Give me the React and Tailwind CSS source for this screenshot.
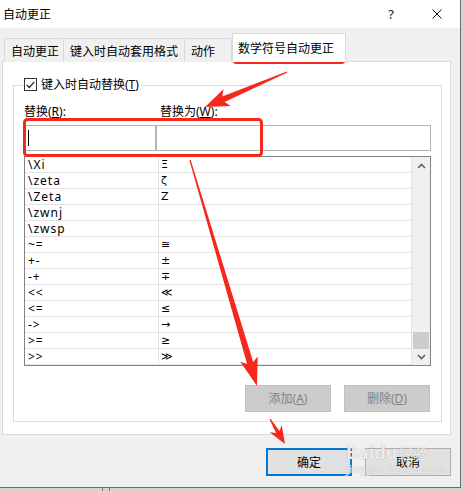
import React from "react";

const RED = "#f4281d";

const rows = [
  ["\\Xi", "Ξ"],
  ["\\zeta", "ζ"],
  ["\\Zeta", "Z"],
  ["\\zwnj", ""],
  ["\\zwsp", ""],
  ["~=", "≅"],
  ["+-", "±"],
  ["-+", "∓"],
  ["<<", "≪"],
  ["<=", "≤"],
  ["->", "→"],
  [">=", "≥"],
  [">>", "≫"],
];

// 手绘箭头：尾部细，头部粗
const arrowPoints = (tx, ty, hx, hy, headLen, headHalf, shaft) => {
  const dx = hx - tx;
  const dy = hy - ty;
  const len = Math.hypot(dx, dy);
  const ux = dx / len;
  const uy = dy / len;
  const nx = -uy;
  const ny = ux;
  const bx = hx - ux * headLen;
  const by = hy - uy * headLen;
  const pts = [
    [tx + nx * 0.6, ty + ny * 0.6],
    [bx + nx * shaft, by + ny * shaft],
    [bx - ux * 4 + nx * headHalf, by - uy * 4 + ny * headHalf],
    [hx, hy],
    [bx - ux * 4 - nx * headHalf, by - uy * 4 - ny * headHalf],
    [bx - nx * shaft, by - ny * shaft],
    [tx - nx * 0.6, ty - ny * 0.6],
  ];
  return pts.map((p) => p.map((v) => v.toFixed(1)).join(",")).join(" ");
};

const Chevron = ({ up }) => (
  <svg width="9" height="6" viewBox="0 0 9 6">
    <polyline
      points={up ? "1,5 4.5,1.5 8,5" : "1,1 4.5,4.5 8,1"}
      fill="none"
      stroke="#606060"
      strokeWidth="1.6"
    />
  </svg>
);

const App = () => {
  return (
    <div className="relative w-[463px] h-[491px] overflow-hidden bg-[#d4d4d4] font-['Noto_Sans','Noto_Sans_CJK_SC',sans-serif] text-[12px] leading-[15px] text-black">
      <div className="w-[461px] h-[488px] bg-[#f0f0f0] border-r border-b border-[#6b6b6b] flex flex-col">
        {/* 标题栏 */}
        <div className="h-[28px] bg-white flex items-center">
          <span className="pl-[3px] text-[12px]">自动更正</span>
          <span className="ml-auto text-[13px] text-[#222]">?</span>
          <svg className="ml-[38px] mr-[18px]" width="10" height="10" viewBox="0 0 10 10">
            <path d="M0.5 0.5 L9.5 9.5 M9.5 0.5 L0.5 9.5" stroke="#111" strokeWidth="1" />
          </svg>
        </div>

        {/* 选项卡 */}
        <div className="pt-[6px] pl-[4px] flex items-end h-[34px] relative z-10 -mb-px">
          <div className="h-[24px] w-[59px] border-l border-t border-[#d9d9d9] bg-[#f0f0f0] pl-[6px] pt-[5px]">
            自动更正
          </div>
          <div className="h-[24px] w-[121px] border-l border-t border-[#d9d9d9] bg-[#f0f0f0] pl-[6px] pt-[5px]">
            键入时自动套用格式
          </div>
          <div className="h-[24px] w-[48px] border-l border-t border-r border-[#d9d9d9] bg-[#f0f0f0] pl-[6px] pt-[5px]">
            动作
          </div>
          <div className="h-[29px] w-[114px] border-l border-t border-r border-[#d9d9d9] bg-white pl-[5px] pt-[7px]">
            数学符号自动更正
          </div>
        </div>

        {/* 面板 */}
        <div className="ml-[2px] w-[449px] h-[374px] bg-white border border-[#d9d9d9] pt-[23px] pl-[10px]">
          <div className="relative w-[429px] h-[337px] border border-[#dcdcdc] pt-[18px] px-[10px]">
            <div className="absolute left-[9px] top-[-8px] bg-white pr-[2px] pl-[1px] flex items-center gap-[4px] h-[13px]">
              <div className="w-[13px] h-[13px] border border-[#333] flex items-center justify-center">
                <svg width="9" height="8" viewBox="0 0 9 8">
                  <polyline points="0.8,4 3.3,6.5 8.3,0.8" fill="none" stroke="#222" strokeWidth="1.2" />
                </svg>
              </div>
              <span>
                键入时自动替换(<span className="underline">T</span>)
              </span>
            </div>

            <div className="flex h-[16px]">
              <span className="w-[136px]">
                替换(<span className="underline">R</span>):
              </span>
              <span>
                替换为(<span className="underline">W</span>):
              </span>
            </div>

            <div className="mt-[5px] ml-[1px] flex">
              <div className="w-[131px] h-[26px] border border-[#b4b4b4] flex items-center pl-[2px]">
                <div className="w-px h-[16px] bg-black" />
              </div>
              <div className="w-[276px] h-[26px] border border-[#b4b4b4]" />
            </div>

            <div className="mt-[5px] w-[407px] h-[210px] border border-[#828282] flex">
              <div className="w-[387px] flex flex-col">
                {rows.map((r, i) => (
                  <div key={i} className="h-[16px] flex border-b border-[#e3e3e3]">
                    <div className="w-[134px] border-r border-[#e3e3e3] pl-[3px] whitespace-pre tracking-[1px]">
                      {r[0]}
                    </div>
                    <div className="flex-1 border-r border-[#e3e3e3] pl-[2px] font-['DejaVu_Sans',sans-serif] text-[11px]">
                      {r[1]}
                    </div>
                  </div>
                ))}
              </div>
              <div className="w-[18px] bg-[#f0f0f0] flex flex-col">
                <div className="h-[17px] flex items-center justify-center">
                  <Chevron up />
                </div>
                <div className="flex-1" />
                <div className="h-[17px] mx-[1px] bg-[#cdcdcd]" />
                <div className="h-[16px] flex items-center justify-center">
                  <Chevron />
                </div>
              </div>
            </div>

            <div className="mt-[19px] mr-[1px] flex justify-end gap-[13px]">
              <div className="w-[86px] h-[27px] bg-[#cccccc] border border-[#bfbfbf] text-[#838383] flex items-center justify-center">
                添加(<span className="underline">A</span>)
              </div>
              <div className="w-[86px] h-[27px] bg-[#cccccc] border border-[#bfbfbf] text-[#838383] flex items-center justify-center">
                删除(<span className="underline">D</span>)
              </div>
            </div>
          </div>
        </div>

        {/* 底部按钮 */}
        <div className="mt-[13px] pr-[9px] flex justify-end gap-[13px]">
          <div className="w-[86px] h-[28px] bg-[#e1e1e1] border-2 border-[#0078d7] flex items-center justify-center">
            确定
          </div>
          <div className="w-[86px] h-[28px] bg-[#e1e1e1] border border-[#adadad] flex items-center justify-center">
            取消
          </div>
        </div>
      </div>

      {/* 下方窗口的边 */}
      <div className="h-[3px] flex">
        <div className="ml-[102px] w-px h-full bg-[#777]" />
        <div className="ml-[6px] w-px h-full bg-[#777]" />
      </div>

      {/* 百度经验水印 */}
      <div className="absolute left-[346px] top-[441px] flex flex-col text-white/80 [text-shadow:0_0_1px_#9a9a9a] pointer-events-none">
        <div className="flex items-end">
          <span className="text-[18px] leading-[22px] font-bold">Bai</span>
          <span className="text-[18px] leading-[22px] font-bold">du</span>
          <span className="text-[15px] leading-[20px] ml-[1px]">经验</span>
        </div>
        <span className="text-[11px] leading-[12px] tracking-[0.3px]">jingyan.baidu.com</span>
      </div>

      {/* 红色标注 */}
      <svg className="absolute left-0 top-0 pointer-events-none" width="463" height="491" viewBox="0 0 463 491">
        <rect x="233.5" y="36.5" width="111" height="26" rx="3" fill="none" stroke={RED} strokeWidth="3" />
        <rect x="24.5" y="119.5" width="237" height="36" rx="3" fill="none" stroke={RED} strokeWidth="3" />
        <polygon points={arrowPoints(287, 72, 205, 107, 20, 9, 3)} fill={RED} />
        <polygon points={arrowPoints(190, 160, 257, 386, 24, 9, 3.2)} fill={RED} />
        <polygon points={arrowPoints(270, 419, 285, 444, 14, 7, 2)} fill={RED} />
      </svg>
    </div>
  );
};

export default App;
